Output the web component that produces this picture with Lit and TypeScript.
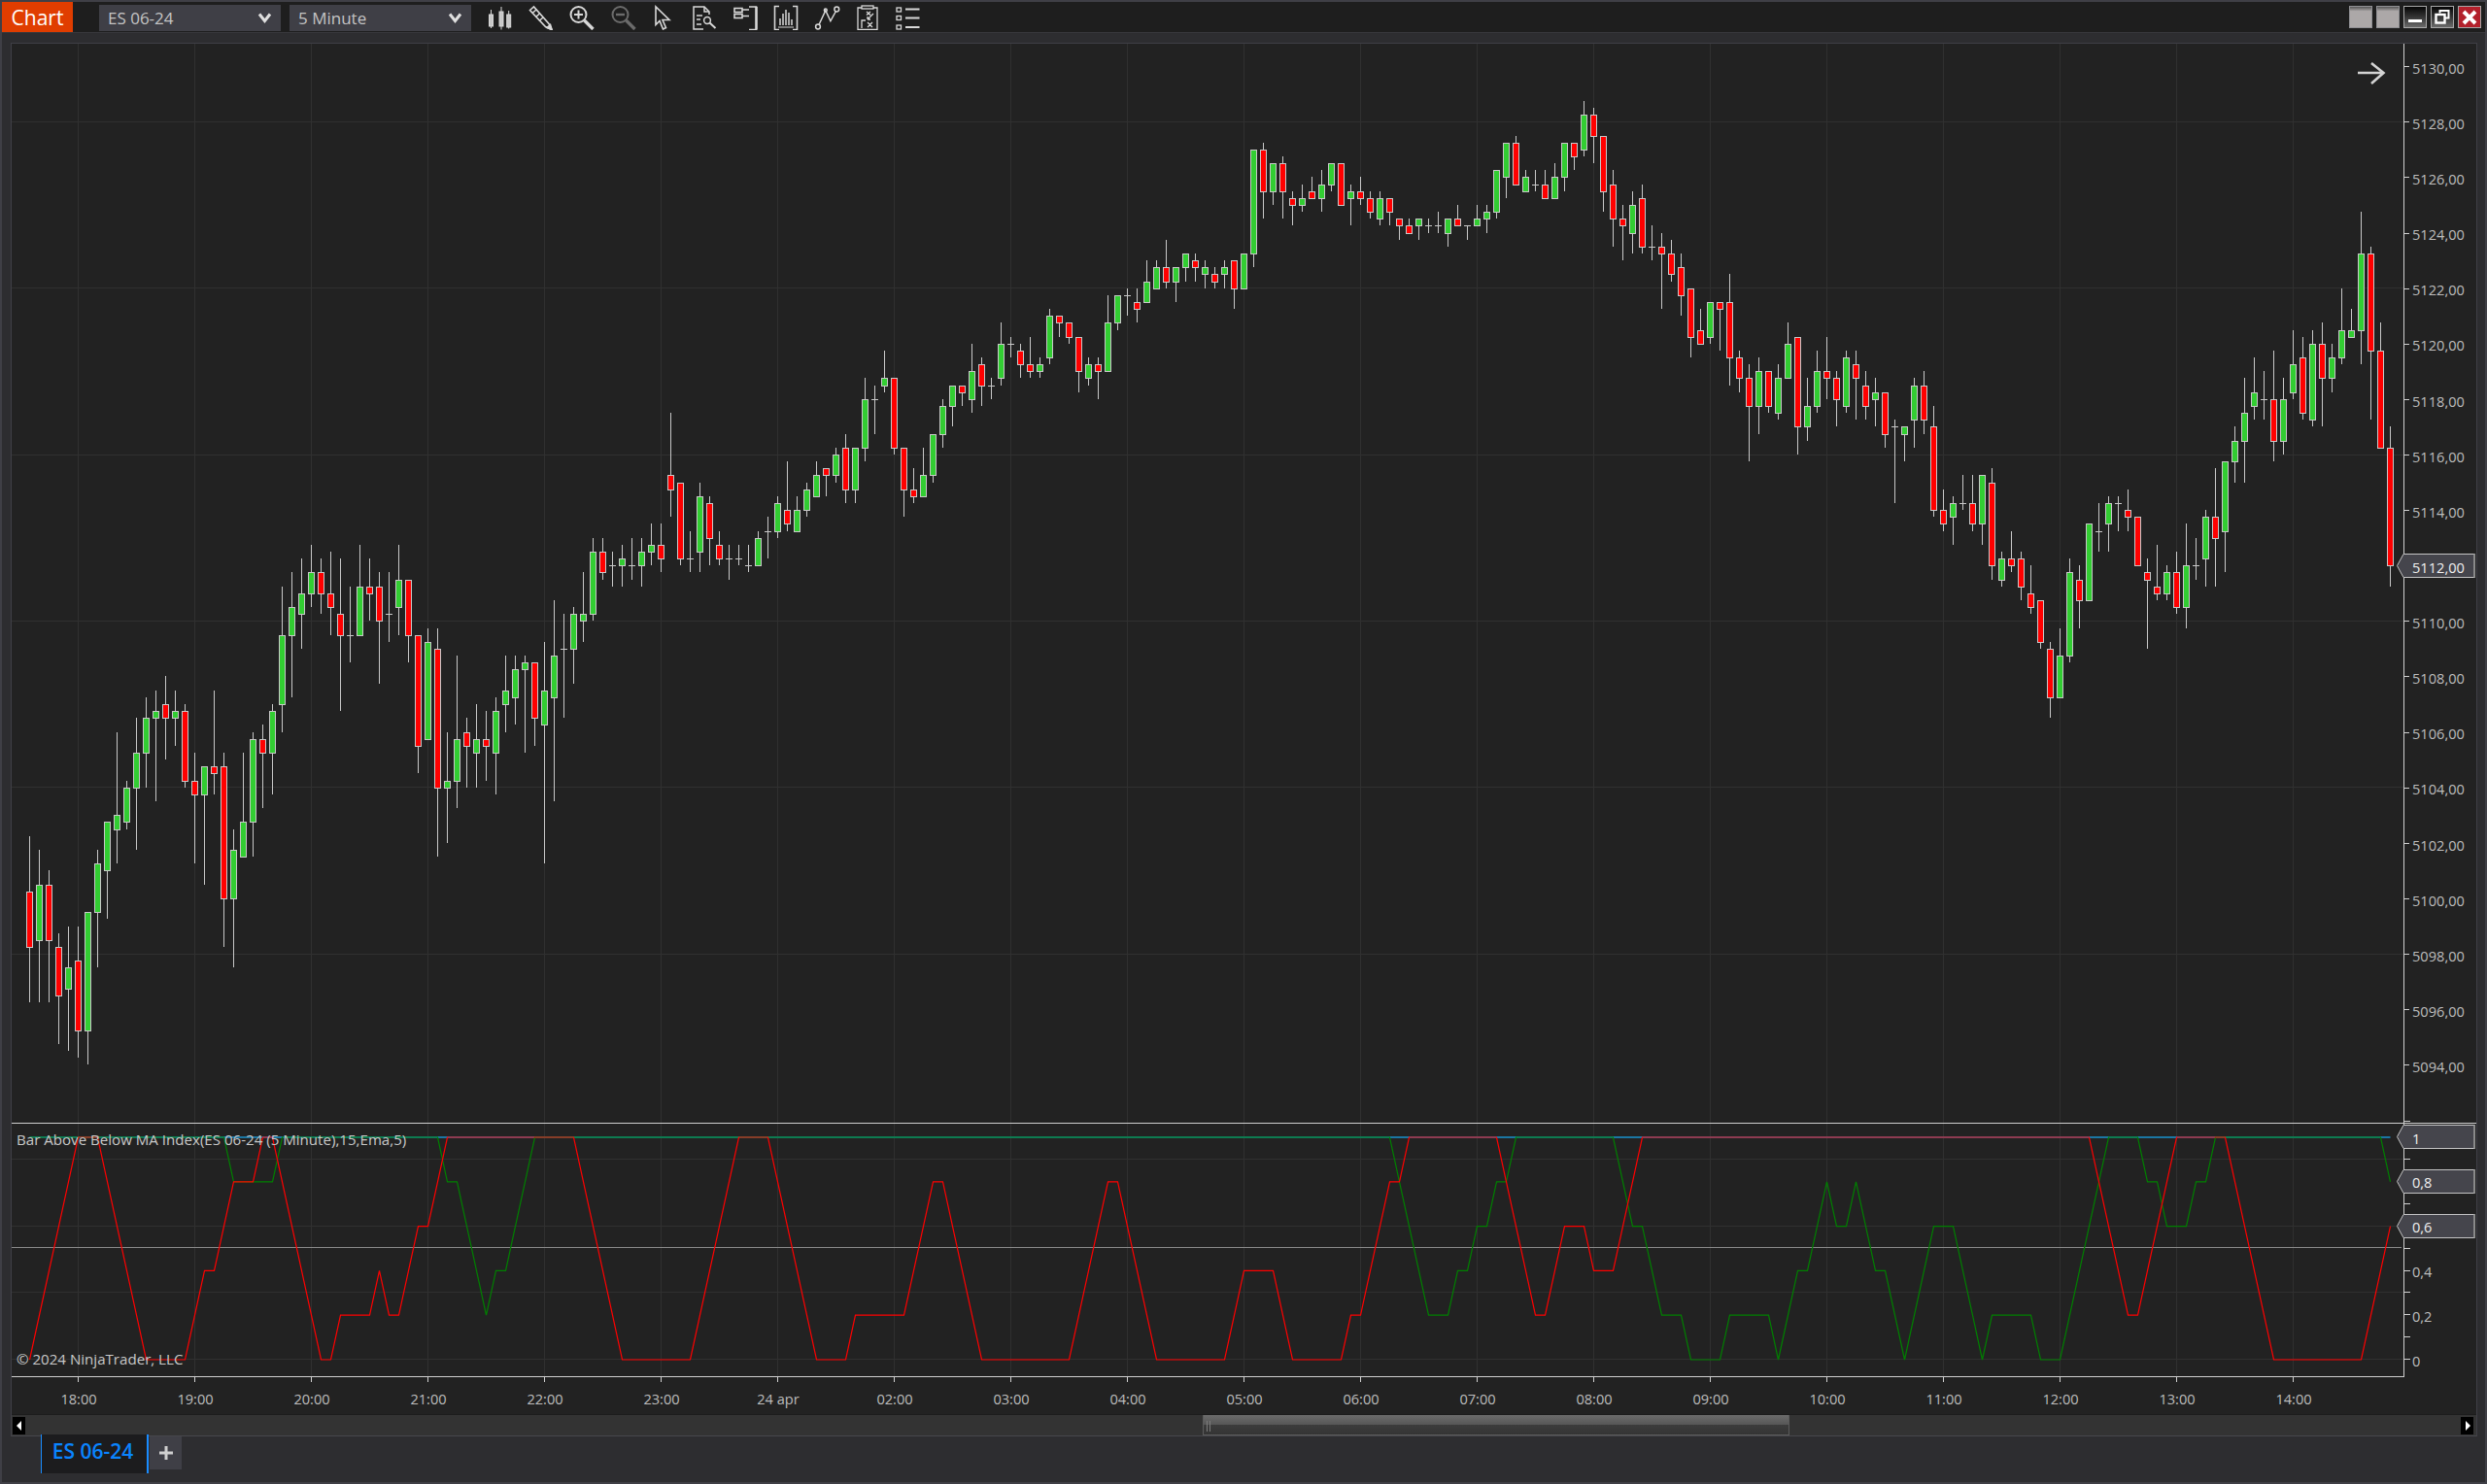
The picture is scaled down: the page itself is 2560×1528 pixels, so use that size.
import { LitElement, html, css, svg } from "lit";
import { customElement } from "lit/decorators.js";

type Seg = { off: number; f: number; d: string };
const segs: Seg[] = [
  { off: 500, f: 1568 / 620, d: "R916 1058 1202 1348|G951 1040 1185 1348|R1005 1040 1185 1348|R1168 1202 1329 1456|G1151 1255 1312 1474|R1151 1238 1420 1492|G1111 1111 1420 1510|G951 985 1111 1257|G876 876 1003 1130|G645 858 896 986|G771 788 877 898|G607 696 788 950|G555 605 697 789|G536 588 605 824|R499 570 605 716|G536 588 605 680|R573 588 770 788|R698 770 806 986|G732 732 806 1042|R536 732 750 806|R698 732 1076 1204|G898 949 1076 1257|G698 876 968 968|G645 661 877 968|R626 661 697 842|G573 588 697 806|G266 390 571 645|G228 317 390 554|G192 282 335 427|G157 226 282 319|R192 226 282 336|R175 282 317 392|R192 335 390 589|D266 390 390 462|G157 264 390 390|R192 264 282 354|R228 264 353 518|D228 335 335 410|G157 244 317 392|R244 244 390 462|R390 390 678 750|G373 408 661 661|R373 426 788 968|G645 770 788 933|G446 661 770 842|R607 643 678 789|G573 661 697 789|R590 661 679 771|G555 588 697 806|G446 535 571 645|G446 480 553 625|G446 462 480 698|R462 462 605 680|G410 535 623 986|G302 444 553 824|D336 426 426 607|G320 335 426 518|G228 335 353 410|G140 174 335 354|R140 174 226 245|D175 208 208 266" },
  { off: 250, f: 3, d: "G937 976 998 1065|D915 997 997 1040|G915 955 998 1065|G870 934 955 998|R870 934 977 1020|R528 718 764 849|R739 739 977 998|D891 976 976 1020|G741 784 956 1020|R786 805 913 998|R891 934 977 998|D936 976 976 1041|D936 976 976 998|D936 997 997 1020|G891 913 998 998|D849 889 889 978|G786 805 890 915|R678 826 869 890|G786 826 890 890|G741 763 827 849|G678 718 785 785|R697 697 718 786|G636 655 719 741|R591 634 764 807|G634 634 764 807|G420 484 635 678|D441 484 484 591|G336 418 440 465|R418 418 635 657|R634 634 764 849|R699 763 785 807|G636 718 785 785|G589 589 719 741|G486 505 590 636|G439 439 506 570|R439 439 464 507|G315 397 485 528|R357 376 439 507|D420 439 439 486|G249 313 419 441|D291 313 313 357|R315 334 376 420|R291 376 397 420|G357 376 398 420|G207 226 356 378|R226 226 248 291|R247 247 289 315|R289 289 397 465|G357 376 418 441|R357 376 397 486|G165 247 398 398|G163 163 248 270|D141 163 163 228|R141 184 206 249|G57 118 185 185|G57 76 139 139|R-6 76 118 141|G76 76 119 186|G34 34 76 120|R36 55 76 120|G57 76 97 141|R78 97 118 141|G57 76 97 141|R55 55 139 207|G34 34 139 139" },
  { off: 100, f: 3, d: "G163 163 484 528|R141 163 289 378|G205 205 289 336|R186 205 289 378|R291 313 334 399|G270 313 334 357|R249 289 313 315|G228 268 313 357|G205 205 268 291|R205 205 334 334|G270 289 313 399|R249 289 313 336|R291 313 355 378|G291 313 376 399|R313 313 355 399|R376 376 397 441|R378 397 418 418|G376 376 397 441|D378 397 397 420|D357 397 397 420|G376 376 418 465|R336 376 397 397|D397 397 397 441|G336 376 397 397|G336 355 376 420|G226 226 355 378|G139 139 247 315|R120 139 268 268|G228 247 290 290|D228 268 268 291|R228 268 313 313|G207 247 313 313|G139 139 247 291|R139 139 184 228|G15 55 163 186|R36 55 118 207|R118 118 289 357|R228 268 376 465|R336 376 397 507|G291 334 418 486|R270 313 464 486|D399 463 463 507|R420 463 484 657|R441 484 547 570|R486 526 613 678|R589 589 739 807|R657 718 763 763|G634 634 739 765|R634 634 655 786|R549 634 805 891|R786 805 868 915|R828 868 955 1128|G807 847 955 1041|R847 847 955 978|G828 868 976 999|G699 763 868 868|R739 739 1018 1107|G870 955 1018 1065|G786 847 955 978|R741 847 868 936|R849 868 934 1020|G786 805 955 978|R786 826 868 999|R849 889 955 999" },
  { off: 200, f: 2.8, d: "G532 572 592 672|R572 572 690 734|D652 670 670 892|G670 670 690 772|G532 550 650 734|R512 550 650 690|R613 670 911 932|R854 911 950 972|G874 891 931 1014|D812 891 891 912|R812 891 950 972|G810 810 950 1014|R792 830 1070 1112|G1034 1051 1111 1133|R972 1051 1070 1092|R1034 1051 1132 1172|R1072 1152 1191 1212|R1171 1171 1292 1312|R1294 1311 1451 1511|G1252 1331 1451 1451|G1053 1090 1331 1352|R1072 1110 1171 1252|G950 950 1171 1171|D893 970 970 1033|G874 891 951 1033|D874 891 891 972|R854 911 931 972|R931 931 1070 1070|R1053 1090 1110 1312|R1014 1132 1152 1172|G1072 1090 1152 1172|R1033 1090 1191 1212|G952 1070 1191 1252|D994 1070 1070 1112|G913 931 1051 1133|R792 931 992 1133|G771 771 970 1092|G672 712 771 831|G532 631 712 831|G473 572 611 652|D512 592 592 652|R454 592 712 772|G532 592 712 752|G392 491 572 593|R412 471 631 652|G392 432 650 670|R372 432 530 671|G433 471 530 573|G272 390 471 492|G333 390 410 410|G53 172 390 492|R154 172 452 652|R372 452 732 732|R672 732 1070 1133" },
];

const Y0 = 125.3;
const TICK = 7.14;
const snap = (y: number) => Y0 + Math.round((y - Y0) / TICK) * TICK;
type Bar = { c: string; h: number; a: number; b: number; l: number };
const bars: Bar[] = [];
for (const s of segs) {
  for (const row of s.d.split("|")) {
    const [h, a, b, l] = row.slice(1).split(" ").map((n) => snap(s.off + Number(n) / s.f));
    bars.push({ c: row[0], h, a, b, l });
  }
}

const RED: [number, number][] = [[0,0],[5,1],[7,1],[12,0],[16,0],[18,.4],[19,.4],[21,.8],[23,.8],[24,1],[25,1],[30,0],[31,0],[32,.2],[35,.2],[36,.4],[37,.2],[38,.2],[40,.6],[41,.6],[43,1],[56,1],[61,0],[68,0],[73,1],[76,1],[81,0],[84,0],[85,.2],[90,.2],[93,.8],[94,.8],[98,0],[107,0],[111,.8],[112,.8],[116,0],[123,0],[125,.4],[128,.4],[130,0],[135,0],[136,.2],[137,.2],[140,.8],[141,.8],[142,1],[151,1],[155,.2],[156,.2],[158,.6],[160,.6],[161,.4],[163,.4],[166,1],[212,1],[216,.2],[217,.2],[221,1],[226,1],[231,0],[240,0],[243,.6]];
const GREEN: [number, number][] = [[0,1],[20,1],[21,.8],[25,.8],[26,1],[42,1],[43,.8],[44,.8],[47,.2],[48,.4],[49,.4],[52,1],[140,1],[141,.8],[144,.2],[146,.2],[147,.4],[148,.4],[149,.6],[150,.6],[151,.8],[152,.8],[153,1],[163,1],[165,.6],[166,.6],[168,.2],[170,.2],[171,0],[174,0],[175,.2],[179,.2],[180,0],[182,.4],[183,.4],[185,.8],[186,.6],[187,.6],[188,.8],[190,.4],[191,.4],[193,0],[196,.6],[198,.6],[201,0],[202,.2],[206,.2],[207,0],[209,0],[214,1],[217,1],[218,.8],[219,.8],[220,.6],[222,.6],[223,.8],[224,.8],[225,1],[242,1],[243,.8]];

const bx = (i: number) => 30.5 + 10 * i;
const iy = (v: number) => 1400 - 229 * v;
const pts = (s: [number, number][]) => s.map(([i, v]) => `${bx(i)},${iy(v)}`).join(" ");
const priceY = (p: number) => Y0 + (5128 - p) * 28.56;
const crisp = (y: number) => Math.round(y) + 0.5;

const TIMES = ["18:00","19:00","20:00","21:00","22:00","23:00","24 apr","02:00","03:00","04:00","05:00","06:00","07:00","08:00","09:00","10:00","11:00","12:00","13:00","14:00"];
const PRICES: number[] = [];
for (let p = 5130; p >= 5094; p -= 2) PRICES.push(p);
const MAIN_GRID = [0, 1, 2, 3, 4, 5].map((k) => crisp(125 + 171.36 * k));
const SUB_GRID = [1193, 1262, 1330, 1399].map((y) => y + 0.5);
const SUB_TICKS = [1154, 1193, 1239, 1285, 1308, 1330, 1353, 1376, 1399];

const flag = (cy: number, label: string, base: number) => svg`
  <polygon class="flag" points="2467.5,${cy} 2474,${cy - 12} 2547.5,${cy - 12} 2547.5,${cy + 12} 2474,${cy + 12}"></polygon>
  <line class="flag-end" x1="2547" x2="2547" y1=${cy - 12} y2=${cy + 12}></line>
  <text class="flag-t" x="2483" y=${base}>${label}</text>`;

@customElement("chart-canvas")
class ChartCanvas extends LitElement {
  static styles = css`
    :host { display: block; width: 2537px; height: 1411px; }
    svg { display: block; background: #222222; font-family: "Open Sans", sans-serif; }
    .grid { stroke: #303030; stroke-width: 1; shape-rendering: crispEdges; }
    .axis { stroke: #cfcfcf; stroke-width: 1; shape-rendering: crispEdges; }
    .mid { stroke: #8a8a8a; stroke-width: 1; shape-rendering: crispEdges; }
    .wick { stroke: #c8c8c8; stroke-width: 1; shape-rendering: crispEdges; }
    .body { stroke: #c8c8c8; stroke-width: 1; shape-rendering: crispEdges; }
    .up { fill: #32cd32; }
    .dn { fill: #ff0000; }
    .lbl { fill: #bdbdbd; font-size: 14.6px; }
    .ind { fill: #c8c8c8; font-size: 15.1px; }
    .flag { fill: #45454c; stroke: #c4c4c4; stroke-width: 1; }
    .flag-end { stroke: #8a8a8a; stroke-width: 2; }
    .flag-t { fill: #efefef; font-size: 14.6px; }
    .base { stroke: #1b76a3; stroke-width: 2; fill: none; }
    .gs { stroke: #008000; stroke-width: 1.2; fill: none; }
    .rs { stroke: #ff0000; stroke-width: 1.2; fill: none; }
    .arrow { stroke: #d4d4d4; stroke-width: 2.6; fill: none; }
  `;
  render() {
    return html`<svg width="2537" height="1411" viewBox="12 45 2537 1411">
      ${TIMES.map((_, k) => svg`<line class="grid" x1=${80.5 + 120 * k} x2=${80.5 + 120 * k} y1="45" y2="1417"></line>`)}
      ${MAIN_GRID.map((y) => svg`<line class="grid" x1="12" x2="2474" y1=${y} y2=${y}></line>`)}
      ${SUB_GRID.map((y) => svg`<line class="grid" x1="12" x2="2474" y1=${y} y2=${y}></line>`)}

      ${bars.map((b, i) => {
        const x = bx(i);
        const ta = crisp(b.a);
        const tb = crisp(b.b);
        return svg`
          <line class="wick" x1=${x} x2=${x} y1=${Math.round(b.h)} y2=${Math.round(b.l)}></line>
          ${b.c === "D"
            ? svg`<line class="wick" x1=${x - 3.5} x2=${x + 3.5} y1=${ta} y2=${ta}></line>`
            : svg`<rect class="body ${b.c === "G" ? "up" : "dn"}" x=${x - 3} y=${ta} width="6" height=${tb - ta}></rect>`}`;
      })}

      <path class="arrow" d="M2427 75H2453M2441 65L2453.5 75L2441 86"></path>

      <line class="axis" x1="12" x2="2549" y1="1156.5" y2="1156.5"></line>
      <line class="mid" x1="12" x2="2472" y1="1284.5" y2="1284.5"></line>
      <line class="axis" x1="12" x2="2474.5" y1="1417.5" y2="1417.5"></line>
      <line class="axis" x1="2474.5" x2="2474.5" y1="45" y2="1418"></line>

      <line class="base" x1=${bx(0)} x2=${bx(243)} y1=${iy(1)} y2=${iy(1)}></line>
      <polyline class="gs" points=${pts(GREEN)}></polyline>
      <polyline class="rs" points=${pts(RED)}></polyline>

      ${PRICES.map((p) => {
        const y = priceY(p);
        return svg`<line class="axis" x1="2475" x2="2480" y1=${crisp(y)} y2=${crisp(y)}></line>`;
      })}
      <line class="axis" x1="2475" x2="2480" y1="1154.5" y2="1154.5"></line>
      ${PRICES.filter((p) => p !== 5112).map((p) => svg`<text class="lbl" x="2483" y=${priceY(p) + 7.7}>${p},00</text>`)}
      ${flag(582.5, "5112,00", 590)}

      ${SUB_TICKS.map((y) => svg`<line class="axis" x1="2475" x2="2481" y1=${y + 0.5} y2=${y + 0.5}></line>`)}
      <text class="lbl" x="2483" y="1315">0,4</text>
      <text class="lbl" x="2483" y="1360.7">0,2</text>
      <text class="lbl" x="2483" y="1406.7">0</text>
      ${flag(1170.5, "1", 1178.3)}
      ${flag(1216.5, "0,8", 1222.7)}
      ${flag(1262.5, "0,6", 1268.7)}

      <text class="ind" x="17" y="1179">Bar Above Below MA Index(ES 06-24 (5 Minute),15,Ema,5)</text>
      <text class="ind" x="17" y="1405">© 2024 NinjaTrader, LLC</text>

      ${TIMES.map((t, k) => svg`
        <line class="axis" x1=${80.5 + 120 * k} x2=${80.5 + 120 * k} y1="1418" y2="1423"></line>
        <text class="lbl" text-anchor="middle" x=${81 + 120 * k} y="1446">${t}</text>`)}
    </svg>`;
  }
}

const ICONS = [
  svg`<g fill="#c8c8c8" stroke="#d8d8d8" stroke-width="1"><path d="M5.5 5V24M16 2V25.5M23.7 6V24.5" fill="none"/><rect x="3.5" y="10" width="4" height="12"/><rect x="14" y="7" width="4" height="15"/><rect x="21.7" y="10" width="4" height="13"/></g>`,
  svg`<g fill="none" stroke="#d8d8d8" stroke-width="1.6"><path d="M3.5 5.5L7.5 2L23 19.5L26 25.5L19.5 22.5Z"/><path d="M6 8.5L10 5M9.5 12.5L13.5 9M13 16.5L17 13"/><path d="M21 23.5L24.5 20.5L26 25.5Z" fill="#d8d8d8"/></g>`,
  svg`<g fill="none" stroke="#d8d8d8"><circle cx="11.5" cy="10" r="8" stroke-width="2"/><path d="M11.5 5.5V14.5M7 10H16" stroke-width="2"/><path d="M17.5 16L26.5 25" stroke-width="3.4"/></g>`,
  svg`<g fill="none" stroke="#6b6b6b"><circle cx="12.5" cy="10" r="8" stroke-width="2"/><path d="M8 10H17" stroke-width="2.4"/><path d="M18.5 16L27.5 25" stroke-width="3.4"/></g>`,
  svg`<path d="M7 2V20.5L11 16.5L14.5 25L17.5 23.5L14 15.5H21Z" fill="none" stroke="#d8d8d8" stroke-width="1.6"/>`,
  svg`<g fill="none" stroke="#d8d8d8" stroke-width="1.5"><path d="M14 25H4V2H15L20 7V10"/><path d="M15 2V7H20M7 11H13M7 15H11M7 20H12"/><circle cx="18" cy="16" r="3.4"/><path d="M20.5 18.5L26.5 24" stroke-width="2"/></g>`,
  svg`<g fill="none" stroke="#d8d8d8" stroke-width="1.6"><path d="M19 2H26.5V25.5H19"/><path d="M26.5 2V25.5" stroke-width="2.4"/><rect x="4" y="3.5" width="8" height="4"/><rect x="4" y="9.5" width="8" height="4"/><path d="M12 5H19M12 11.5H19"/></g>`,
  svg`<g fill="none" stroke="#d8d8d8" stroke-width="1.6"><path d="M8 1.5H3.5V25.5H8M22 1.5H26.5V25.5H22"/><path d="M9 21V14M12 21V9M15 21V5M18 21V8M21 21V15" stroke-width="1.5"/><path d="M7 23H23" stroke-width="1"/></g>`,
  svg`<g fill="none" stroke="#d8d8d8" stroke-width="1.5"><circle cx="6" cy="22.5" r="2.4"/><circle cx="25.3" cy="4.5" r="2.4"/><path d="M7 20.5L13.8 5.7L18.9 16.7L24.5 6.5"/><circle cx="13.8" cy="5.5" r="1.4"/></g>`,
  svg`<g fill="none" stroke="#d8d8d8" stroke-width="1.3"><path d="M10 3H6V25.5H26V3H22"/><rect x="10" y="1" width="12" height="3"/><path d="M15 7L19 10.5M19 7L15 10.5M22 9L16 15M16 15H19M16 15V12"/><path d="M10 24V16H14M16 18L21 23M21 18L16 23"/></g>`,
  svg`<g fill="none" stroke="#d8d8d8"><g stroke-width="1.3"><rect x="4" y="3" width="4.5" height="4"/><rect x="4" y="11.5" width="4.5" height="4"/><rect x="4" y="21" width="4.5" height="4"/></g><path d="M13 4.5H27.5M13 13.5H27.5M13 23H27.5" stroke-width="2"/></g>`,
];

@customElement("app-root")
class AppRoot extends LitElement {
  static styles = css`
    :host { display: block; width: 2560px; height: 1528px; font-family: "Open Sans", sans-serif; }
    .win { box-sizing: border-box; width: 2560px; height: 1528px; background: #2d2d30; border: 2px solid #3f3f46; display: flex; flex-direction: column; }
    .bar { height: 31px; background: #1e1e1e; border-bottom: 1px solid #38383c; display: flex; align-items: center; flex: none; }
    .brand { width: 73px; height: 31px; background: #e03d00; color: #fff; font-size: 21px; display: flex; align-items: center; justify-content: center; }
    .select { box-sizing: border-box; width: 187px; height: 27px; margin-left: 9px; padding: 0 0 0 9px; background: #3f3f46; color: #c4c4c4; font-size: 17px; display: flex; align-items: center; justify-content: space-between; align-self: flex-end; margin-bottom: 1px; }
    .select.first { margin-left: 27px; }
    .select svg { margin-right: 9px; }
    .icons { display: flex; margin-left: 10.5px; }
    .icon { width: 41.9px; display: flex; justify-content: center; }
    .icon svg { display: block; }
    .winbtns { margin-left: auto; margin-right: 4px; display: flex; gap: 4px; }
    .wb { box-sizing: border-box; width: 24px; height: 23px; border: 1px solid #8f8f93; display: flex; align-items: center; justify-content: center; }
    .wb.plain { background: linear-gradient(#555 0, #aca8a8 22%, #aca8a8 100%); }
    .wb.dark { background: linear-gradient(#050505 0, #3a3a3a 55%, #6a6a6a 100%); border-color: #a8a8a8; }
    .wb.close { background: #b3202b; border-color: #a8a8a8; }
    .panel { box-sizing: border-box; width: 2539px; height: 1435px; margin: 10px 0 0 9px; border: 1px solid #3f3f46; border-bottom-color: #47474c; flex: none; display: flex; flex-direction: column; }
    .scroll { height: 22px; box-sizing: border-box; background: #333333; border-top: 1px solid #1c1c1c; display: flex; align-items: center; }
    .sbtn { width: 13px; height: 18px; background: #000; display: flex; align-items: center; justify-content: center; flex: none; }
    .sbtn.l { margin-left: 1px; }
    .sbtn.r { margin-left: 691px; }
    .thumb { box-sizing: border-box; width: 604px; height: 21px; margin-left: 1212px; border: 1px solid #5c5c5c; border-top: none; background: linear-gradient(#6c6c6c 0, #565656 50%, #3c3c3c 50%, #343434 100%); display: flex; align-items: center; gap: 2px; padding-left: 3px; flex: none; }
    .grip { width: 1px; height: 11px; margin-top: 3px; background: #7a7a7a; }
    .tabs { display: flex; align-items: flex-start; padding-left: 40px; flex: none; margin-top: -2px; }
    .tab { box-sizing: border-box; width: 111px; height: 40px; padding: 0 3px 6px 0; background: #1c1c1e; border-left: 1px solid #1a8cff; border-right: 2px solid #1a8cff; color: #0a84ff; font-size: 21px; font-weight: 600; display: flex; align-items: center; justify-content: center; }
    .plus { width: 33px; height: 34px; margin: 2px 0 0 1px; background: #3f3f46; display: flex; align-items: center; justify-content: center; }
  `;
  render() {
    const chev = html`<svg width="15" height="11" viewBox="0 0 15 11"><path d="M2 1.5L7.5 8.5L13 1.5" fill="none" stroke="#e0e0e0" stroke-width="3"></path></svg>`;
    return html`<div class="win">
      <div class="bar">
        <div class="brand">Chart</div>
        <div class="select first"><span>ES 06-24</span>${chev}</div>
        <div class="select"><span>5 Minute</span>${chev}</div>
        <div class="icons">
          ${ICONS.map((g) => html`<div class="icon"><svg width="32" height="26" viewBox="0 0 32 26">${g}</svg></div>`)}
        </div>
        <div class="winbtns">
          <div class="wb plain"></div>
          <div class="wb plain"></div>
          <div class="wb dark"><svg width="16" height="14" viewBox="0 0 16 14"><rect x="1" y="9" width="14" height="3" fill="#fff"></rect></svg></div>
          <div class="wb dark"><svg width="16" height="15" viewBox="0 0 16 15"><path d="M5.5 3.5V1H14.5V8.5H11" fill="none" stroke="#fff" stroke-width="2"></path><rect x="1.5" y="5" width="9" height="8.5" fill="none" stroke="#fff" stroke-width="2.4"></rect></svg></div>
          <div class="wb close"><svg width="18" height="16" viewBox="0 0 18 16"><path d="M3 2L15 14M15 2L3 14" stroke="#fff" stroke-width="4"></path></svg></div>
        </div>
      </div>
      <div class="panel">
        <chart-canvas></chart-canvas>
        <div class="scroll">
          <div class="sbtn l"><svg width="6" height="10" viewBox="0 0 6 10"><path d="M5 0V10L0 5Z" fill="#fff"></path></svg></div>
          <div class="thumb"><div class="grip"></div><div class="grip"></div></div>
          <div class="sbtn r"><svg width="6" height="10" viewBox="0 0 6 10"><path d="M1 0V10L6 5Z" fill="#fff"></path></svg></div>
        </div>
      </div>
      <div class="tabs">
        <div class="tab">ES 06-24</div>
        <div class="plus"><svg width="16" height="16" viewBox="0 0 16 16"><path d="M8 1V15M1 8H15" stroke="#cfcfcf" stroke-width="3"></path></svg></div>
      </div>
    </div>`;
  }
}
